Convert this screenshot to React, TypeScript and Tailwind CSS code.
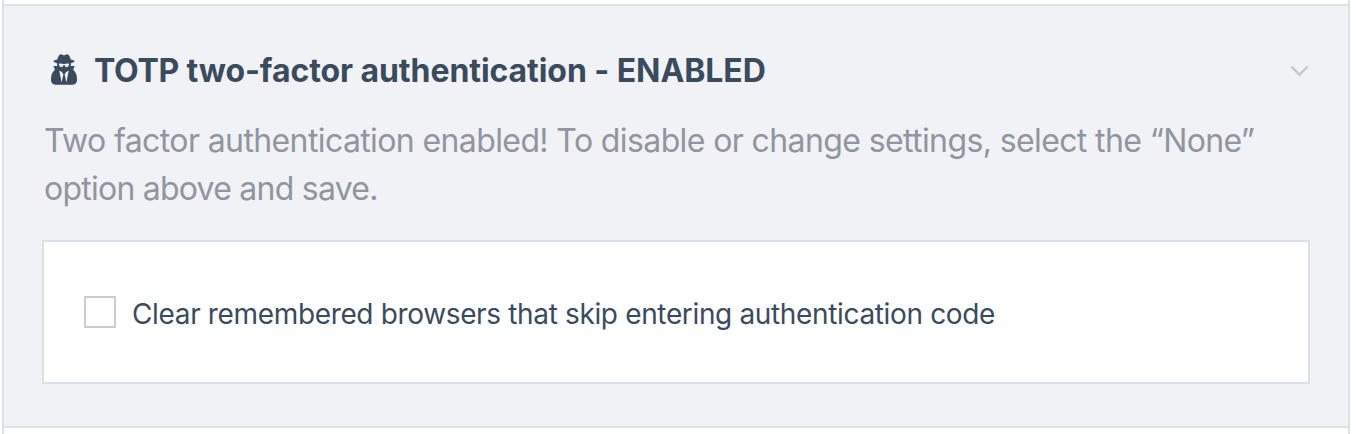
import { FC } from "react";

const UserSecretIcon: FC = () => (
  <svg viewBox="0 0 1408 1664" className="h-[31px] w-[26px] shrink-0 -translate-y-0.5" fill="currentColor" aria-hidden="true">
    <path d="M576 1536l96-448-96-128-128-64zm256 0l128-640-128 64-96 128zm160-1010q-2-4-4-6-10-8-96-8-70 0-167 19-7 2-21 2t-21-2q-97-19-167-19-86 0-96 8-2 2-4 6 2 18 4 27 2 3 7.500 6.500t7.500 10.500q2 4 7.500 20.500t7 20.500 7.500 17 8.500 17 9 14 12 13.500 14 9.500 17.500 8 20.500 4 24.500 2q36 0 59-12.500t32.500-30 14.500-34.500 11.500-29.500 17.500-12.500h12q11 0 17.500 12.500t11.500 29.500 14.500 34.500 32.500 30 59 12.500q13 0 24.500-2t20.500-4 17.500-8 14-9.500 12-13.500 9-14 8.500-17 7.500-17 7-20.500 7.500-20.500q2-7 7.500-10.500t7.500-6.500q2-9 4-27zm416 879q0 121-73 190t-194 69h-874q-121 0-194-69t-73-190q0-61 4.500-118t19-125.500 37.500-123.500 63.500-103.500 93.500-74.500l-90-220h214q-22-64-22-128 0-12 2-32-194-40-194-96 0-57 210-99 17-62 51.500-134t70.500-114q32-37 76-37 30 0 84 31t84 31 84-31 84-31q44 0 76 37 36 42 70.500 114t51.500 134q210 42 210 99 0 56-194 96 7 81-20 160h214l-82 225q63 33 107.500 96.500t65.500 143.500 29 151.500 8 148.500z" />
  </svg>
);

const ChevronIcon: FC = () => (
  <svg viewBox="0 0 20 12" className="h-3 w-5" fill="none" stroke="currentColor" strokeWidth="2.4" aria-hidden="true">
    <path d="M1.300 1.500L9.500 9.700L17.700 1.500" />
  </svg>
);

export default function App() {
  return (
    <div className="h-[434px] overflow-hidden bg-white pr-1.5 pl-0.5 font-['Inter',sans-serif] text-[#3a4b5e]">
      <div className="h-full border-x-2 border-[#dae1e9] pt-1">
        <section className="h-[424px] border-y-2 border-[#dae1e9] bg-[#f1f2f6] px-[38px] pt-10">
          <button type="button" className="flex h-[50px] w-full items-center pl-[9px] text-left">
            <UserSecretIcon />
            <span className="ml-[17px] flex-1 text-[32px] font-bold tracking-[-0.07px] whitespace-nowrap">
              <span className="tracking-[-0.3px]">TOTP</span> two-factor authentication - ENABLED
            </span>
            <span className="text-[#c5c7cb]">
              <ChevronIcon />
            </span>
          </button>
          <p className="mt-[21px] ml-0.5 text-[32px] leading-[48px] tracking-[-0.61px] whitespace-nowrap text-[#9095a0]">
            Two factor authentication enabled! To disable or change settings, select the “None”
            <br />
            <span className="tracking-[-0.76px]">option above and save.</span>
          </p>
          <div className="mt-[27px] flex h-36 items-center border-2 border-[#dae1e9] bg-white px-10">
            <label className="flex items-center">
              <input type="checkbox" className="size-8 appearance-none border-2 border-[#cccccc] bg-white" />
              <span className="ml-4 translate-y-0.5 text-[28px] tracking-[-0.35px] whitespace-nowrap">
                Clear remembered browsers that skip entering authentication code
              </span>
            </label>
          </div>
        </section>
      </div>
    </div>
  );
}
